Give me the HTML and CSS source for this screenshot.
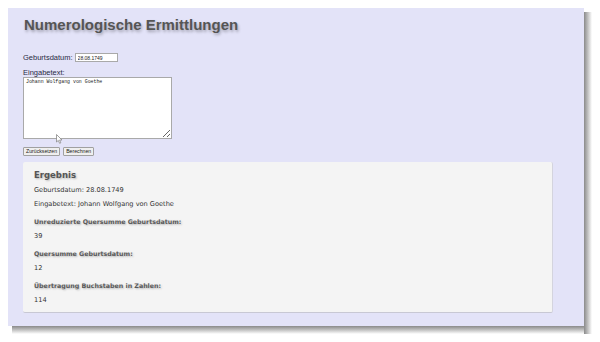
FILE: index.html
```html
<!DOCTYPE html>
<html lang="de">

<head>
    <meta charset="UTF-8">
    <meta name="viewport" content="width=device-width, initial-scale=1.0">
    <title>Numerologische Ermittlungen</title>
    <link rel="stylesheet" href="styles.css">
</head>

<body>
    <div class="frame">
        <div class="page">
            <h1>Numerologische Ermittlungen</h1>

            <form class="form">
                <div class="row">
                    <label for="datum">Geburtsdatum:</label>
                    <input type="text" id="datum" value="28.08.1749">
                </div>
                <label for="text" class="block">Eingabetext:</label>
                <textarea id="text">Johann Wolfgang von Goethe</textarea>
                <div class="buttons">
                    <button type="reset">Zurücksetzen</button>
                    <button type="button">Berechnen</button>
                </div>
            </form>

            <div class="result">
                <h2>Ergebnis</h2>
                <p>Geburtsdatum: 28.08.1749</p>
                <p>Eingabetext: Johann Wolfgang von Goethe</p>
                <h3>Unreduzierte Quersumme Geburtsdatum:</h3>
                <p>39</p>
                <h3>Quersumme Geburtsdatum:</h3>
                <p>12</p>
                <h3>Übertragung Buchstaben in Zahlen:</h3>
                <p>114</p>
            </div>

            <!-- mouse pointer from the screenshot -->
            <svg class="cursor" width="7" height="10" viewBox="0 0 7 10">
                <path d="M0.5 0.5 L0.5 8 L2.3 6.4 L3.6 9.3 L4.8 8.8 L3.6 6 L6 6 Z" fill="#fff" stroke="#888" stroke-width="0.8" />
            </svg>
        </div>
    </div>
</body>

</html>
```

FILE: styles.css
```css
body {
    margin: 0;
    background-color: #fff;
    font-family: "Liberation Sans", Arial, sans-serif;
    color: #333;
}

/* wrapper that paints the drop shadow right and below the page */
.frame {
    margin: 8px 8px 0 8px;
    padding: 0 8px 8px 0;
    background:
        linear-gradient(to right, #8a8a8a, #bdbdbd 45%, #fff) no-repeat right 0 top 4px / 8px calc(100% - 4px),
        linear-gradient(to bottom, #8a8a8a, #bdbdbd 45%, #fff) no-repeat left 4px bottom 0 / calc(100% - 12px) 8px;
}

.page {
    position: relative;
    background-color: #e3e3f8;
    padding: 8px 15px 13px;
}

h1 {
    margin: 0 0 19px 1px;
    font-size: 15px;
    line-height: 18px;
    font-weight: bold;
    color: #555;
    text-shadow: 1px 2px 3px rgba(0, 0, 0, 0.3);
}

.form {
    font-size: 7.5px;
    line-height: 9px;
    color: #2a2a44;
}

.row {
    display: flex;
    align-items: center;
    gap: 2px;
}

.row input {
    width: 43px;
    height: 9px;
    padding: 0 2px;
    box-sizing: border-box;
    border: 1px solid #a9a9a9;
    font-family: "Liberation Sans", Arial, sans-serif;
    font-size: 5px;
    color: #222;
}

.block {
    display: block;
    margin-top: 6px;
}

textarea {
    display: block;
    width: 149px;
    height: 62px;
    box-sizing: border-box;
    padding: 1px 2px;
    border: 1px solid #a9a9a9;
    font-family: "Liberation Mono", monospace;
    font-size: 4.9px;
    line-height: 6px;
    color: #222;
    resize: both;
}

.buttons {
    display: flex;
    gap: 3px;
    margin-top: 8px;
}

button {
    height: 9px;
    padding: 0 2px;
    border: 1px solid #a0a0a0;
    border-radius: 1px;
    background-color: #efefef;
    font-family: "Liberation Sans", Arial, sans-serif;
    font-size: 5.2px;
    line-height: 7px;
    color: #222;
}

.result {
    width: 530px;
    box-sizing: border-box;
    margin-top: 6px;
    padding: 8px 11px 2px;
    background-color: #f4f4f4;
    border-radius: 2px;
    border-bottom: 1px solid #c8c8d4;
    border-right: 1px solid #d4d4de;
    font-family: "DejaVu Sans", Verdana, sans-serif;
    font-size: 6.6px;
    line-height: 9px;
}

.result h2 {
    margin: 0 0 6px;
    font-size: 8.5px;
    line-height: 10px;
    color: #555;
    text-shadow: 1px 1px 2px rgba(0, 0, 0, 0.25);
}

.result h3 {
    margin: 8px 0 6px;
    font-size: 6.3px;
    line-height: 9px;
    color: #5a5a5a;
    text-shadow: 1px 1px 2px rgba(0, 0, 0, 0.25);
}

.result p {
    margin: 0 0 5px;
}

.cursor {
    position: absolute;
    left: 48px;
    top: 126px;
}
```
